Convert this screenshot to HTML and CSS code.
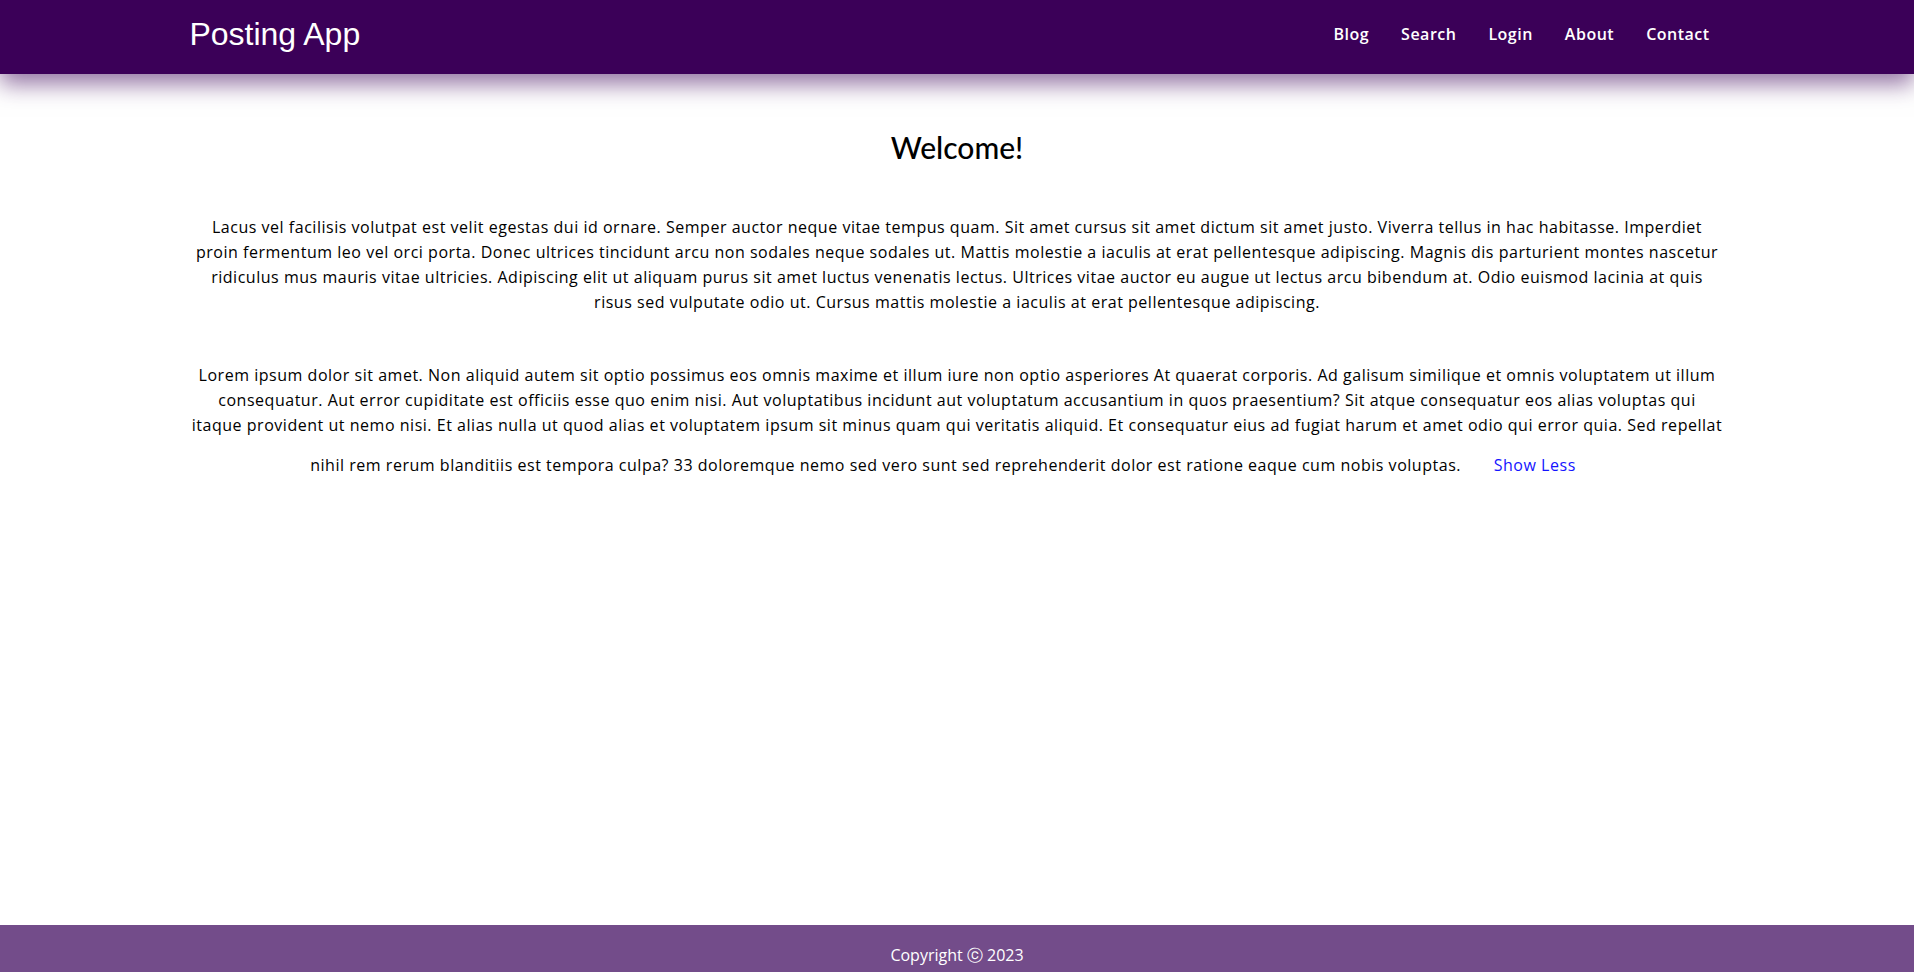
FILE: index.html
```html
<!DOCTYPE html>
<html lang="en">
<head>
<meta charset="utf-8">
<title>Posting App</title>
<link rel="stylesheet" href="styles.css">
</head>
<body>
<div class="page">
  <header class="topbar">
    <div class="container topbar-inner">
      <a class="brand" href="#">Posting App</a>
      <nav class="nav">
        <a href="#">Blog</a>
        <a href="#">Search</a>
        <a href="#">Login</a>
        <a href="#">About</a>
        <a href="#">Contact</a>
      </nav>
    </div>
  </header>
  <main class="container main">
    <h1 class="title">Welcome!</h1>
    <p class="para">Lacus vel facilisis volutpat est velit egestas dui id ornare. Semper auctor neque vitae tempus quam. Sit amet cursus sit amet dictum sit amet justo. Viverra tellus in hac habitasse. Imperdiet proin fermentum leo vel orci porta. Donec ultrices tincidunt arcu non sodales neque sodales ut. Mattis molestie a iaculis at erat pellentesque adipiscing. Magnis dis parturient montes nascetur ridiculus mus mauris vitae ultricies. Adipiscing elit ut aliquam purus sit amet luctus venenatis lectus. Ultrices vitae auctor eu augue ut lectus arcu bibendum at. Odio euismod lacinia at quis risus sed vulputate odio ut. Cursus mattis molestie a iaculis at erat pellentesque adipiscing.</p>
    <p class="para">Lorem ipsum dolor sit amet. Non aliquid autem sit optio possimus eos omnis maxime et illum iure non optio asperiores At quaerat corporis. Ad galisum similique et omnis voluptatem ut illum consequatur. Aut error cupiditate est officiis esse quo enim nisi. Aut voluptatibus incidunt aut voluptatum accusantium in quos praesentium? Sit atque consequatur eos alias voluptas qui itaque provident ut nemo nisi. Et alias nulla ut quod alias et voluptatem ipsum sit minus quam qui veritatis aliquid. Et consequatur eius ad fugiat harum et amet odio qui error quia. Sed repellat nihil rem rerum blanditiis est tempora culpa? 33 doloremque nemo sed vero sunt sed reprehenderit dolor est ratione eaque cum nobis voluptas. <button class="toggle" type="button">Show Less</button></p>
  </main>
  <footer class="footer">Copyright ⓒ 2023</footer>
</div>
</body>
</html>
```
FILE: styles.css
```css
html, body {
  margin: 0;
  padding: 0;
}
body {
  font-family: "Open Sans", "Noto Sans", sans-serif;
  color: #000;
  background: #fff;
}
.page {
  min-height: 100vh;
  display: flex;
  flex-direction: column;
}
.container {
  width: 80%;
  margin: 0 auto;
}
.topbar {
  background: #3b0058;
  height: 74px;
  box-shadow: 0 10px 22px rgba(59, 0, 88, 0.55);
  position: relative;
  z-index: 1;
}
.topbar-inner {
  height: 100%;
  display: flex;
  align-items: center;
  justify-content: space-between;
}
.brand {
  font-family: "Liberation Sans", Arial, sans-serif;
  font-size: 32px;
  color: #fff;
  text-decoration: none;
  margin-left: -2px;
  margin-top: -5px;
}
.nav {
  display: flex;
  gap: 32px;
  padding-right: 13px;
  margin-top: -6px;
}
.nav a {
  color: #fff;
  text-decoration: none;
  font-size: 16px;
  font-weight: 600;
  letter-spacing: 0.5px;
}
.main {
  flex: 1;
  text-align: center;
}
.title {
  font-family: "Lato", sans-serif;
  font-weight: 500;
  font-size: 30px;
  line-height: 36px;
  margin: 55px 0 50px;
}
.para {
  font-size: 16px;
  letter-spacing: 0.525px;
  line-height: 25px;
  margin: 0 0 48px;
}
.toggle {
  font: inherit;
  letter-spacing: inherit;
  color: #1414ff;
  background: transparent;
  border: none;
  padding: 0;
  margin: 15px 28px;
  line-height: 25px;
  cursor: pointer;
}
.footer {
  background: #734c8a;
  color: #fff;
  text-align: center;
  font-size: 16px;
  line-height: 24px;
  padding: 18px 0 5px;
}
```
